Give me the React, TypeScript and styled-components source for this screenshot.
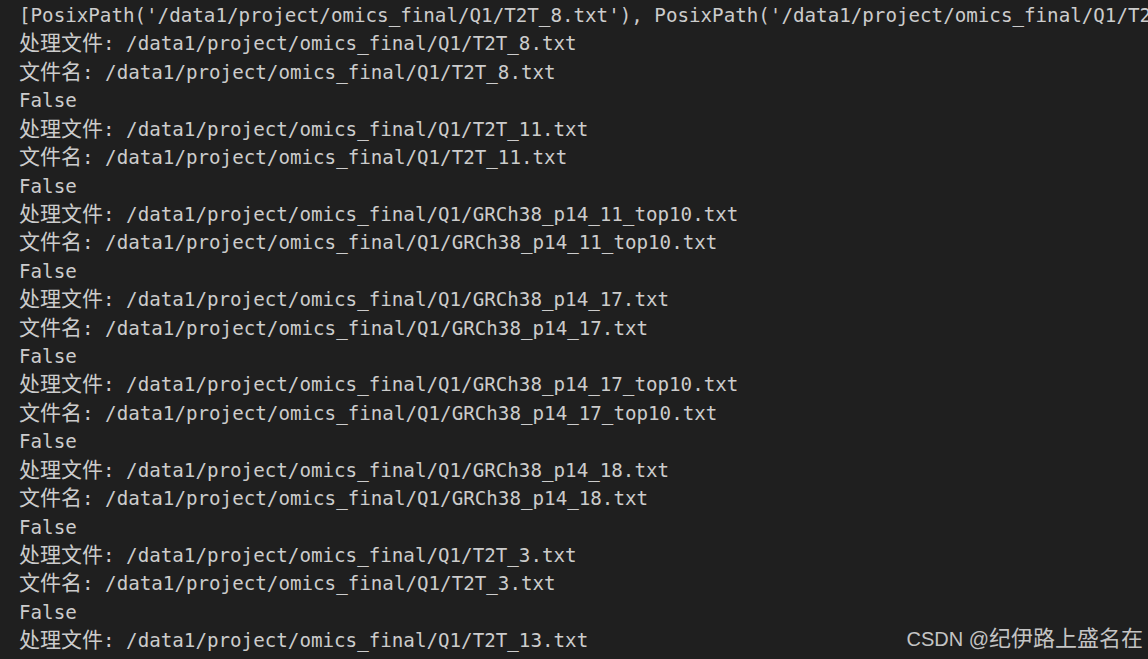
import React from "react";
import styled, { createGlobalStyle } from "styled-components";

const Global = createGlobalStyle`
  html, body { margin: 0; padding: 0; background: #1f1f1f; }
  body { overflow: hidden; }
`;

const Terminal = styled.div`
  position: relative;
  width: 1148px;
  height: 659px;
  overflow: hidden;
  background: #1f1f1f;
  padding: 2px 0 0 19px;
  box-sizing: border-box;
  font-family: "DejaVu Sans Mono", "Liberation Mono", monospace;
  font-size: 19.2px;
  color: #cccccc;
`;

const Row = styled.div`
  height: 28.43px;
  line-height: 28.43px;
  white-space: pre;
`;

const Cjk = styled.span`
  font-family: "Noto Sans CJK SC", sans-serif;
  font-size: 21px;
  line-height: 0;
`;

const Watermark = styled.div`
  position: absolute;
  right: 5px;
  bottom: 8px;
  font-family: "Liberation Sans", Arial, "Noto Sans CJK SC", sans-serif;
  font-size: 20px;
  line-height: 24px;
  color: #c4c4c4;
  white-space: pre;
`;

const WmCjk = styled.span`
  font-family: "Noto Sans CJK SC", sans-serif;
  font-size: 22px;
`;

const base = "/data1/project/omics_final/Q1/";
const files = [
  "T2T_8.txt",
  "T2T_11.txt",
  "GRCh38_p14_11_top10.txt",
  "GRCh38_p14_17.txt",
  "GRCh38_p14_17_top10.txt",
  "GRCh38_p14_18.txt",
  "T2T_3.txt",
];

export default function App() {
  return (
    <>
      <Global />
      <Terminal>
        <Row>{`[PosixPath('${base}T2T_8.txt'), PosixPath('${base}T2`}</Row>
        {files.map((f) => (
          <React.Fragment key={f}>
            <Row>
              <Cjk>处理文件</Cjk>
              {`: ${base}${f}`}
            </Row>
            <Row>
              <Cjk>文件名</Cjk>
              {`: ${base}${f}`}
            </Row>
            <Row>False</Row>
          </React.Fragment>
        ))}
        <Row>
          <Cjk>处理文件</Cjk>
          {`: ${base}T2T_13.txt`}
        </Row>
        <Watermark>
          CSDN @<WmCjk>纪伊路上盛名在</WmCjk>
        </Watermark>
      </Terminal>
    </>
  );
}
